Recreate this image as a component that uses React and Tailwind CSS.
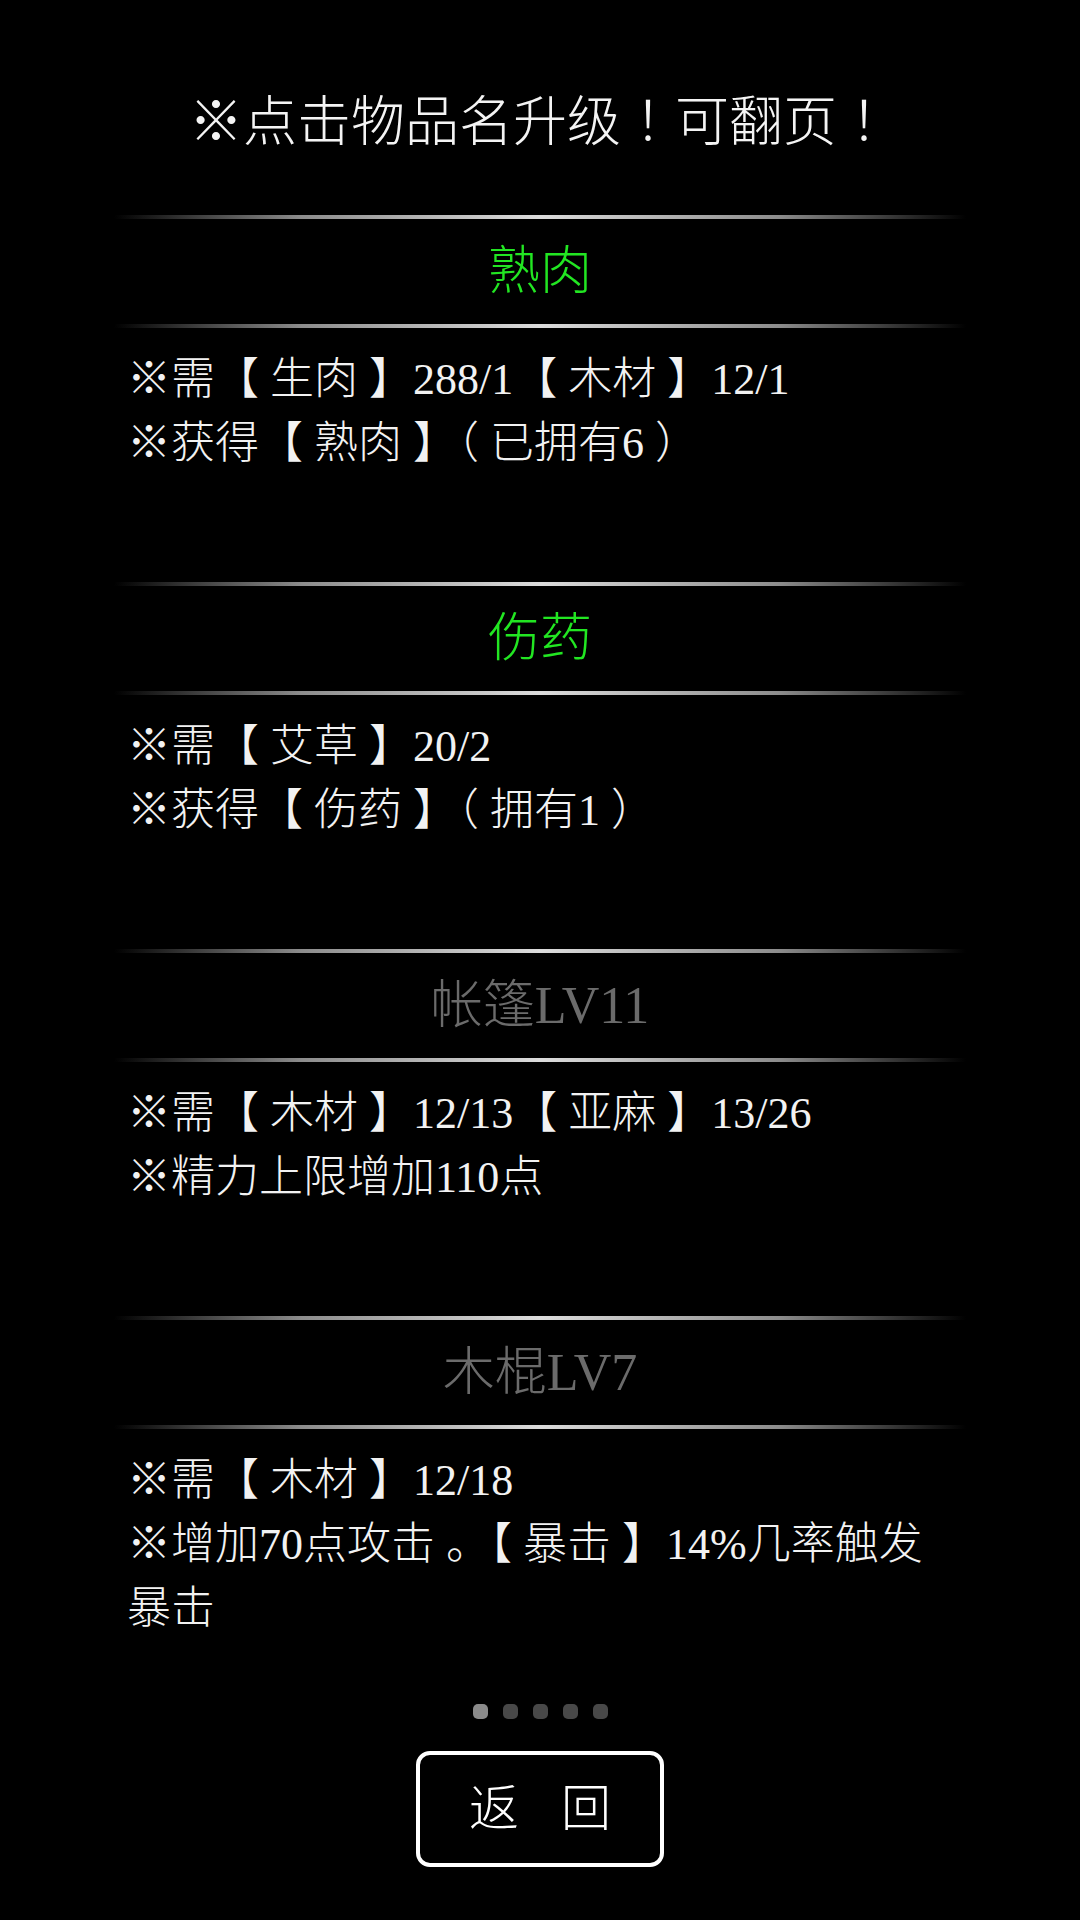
import React, { useState } from "react";

const recipes = [
  {
    id: 1,
    name: "熟肉",
    ready: true,
    lines: ["※需【 生肉 】288/1【 木材 】12/1", "※获得【 熟肉 】（ 已拥有6 ）"],
  },
  {
    id: 2,
    name: "伤药",
    ready: true,
    lines: ["※需【 艾草 】20/2", "※获得【 伤药 】（ 拥有1 ）"],
  },
  {
    id: 3,
    name: "帐篷LV11",
    ready: false,
    lines: ["※需【 木材 】12/13【 亚麻 】13/26", "※精力上限增加110点"],
  },
  {
    id: 4,
    name: "木棍LV7",
    ready: false,
    lines: ["※需【 木材 】12/18", "※增加70点攻击 。【 暴击 】14%几率触发暴击"],
  },
];

const Divider = () => (
  <div className="w-[852px] h-[4px] bg-[linear-gradient(to_right,transparent_0%,#8c8c8c_22%,#dcdcdc_50%,#8c8c8c_78%,transparent_100%)]" />
);

const RecipeSlot = ({ recipe }) => (
  <div className="h-[367px] w-[852px] flex flex-col">
    <Divider />
    <div className="h-[105px] flex items-center justify-center">
      <span
        className={`text-[52px] leading-none font-light ${
          recipe.ready ? "text-[#22e622]" : "text-[#6b6b6b]"
        }`}
      >
        {recipe.name}
      </span>
    </div>
    <Divider />
    <div className="pt-[20px] pl-[13px] pr-[17px] text-[44px] leading-[64px] font-light text-[#f2f2f2]">
      {recipe.lines.map((line, i) => (
        <p key={i}>{line}</p>
      ))}
    </div>
  </div>
);

export default function App() {
  const [page, setPage] = useState(0);

  return (
    <div className="w-[1080px] h-[1920px] bg-black flex flex-col items-center font-['Liberation_Serif','Noto_Sans_CJK_SC',serif] overflow-hidden">
      {/* header */}
      <div className="h-[215px] pt-[91px]">
        <p className="text-[54px] leading-[54px] font-light text-[#f4f4f4]">
          ※点击物品名升级
          <span className="font-['Noto_Sans_CJK_JP',sans-serif]">！</span>
          可翻页
          <span className="font-['Noto_Sans_CJK_JP',sans-serif]">！</span>
        </p>
      </div>

      {/* slots */}
      {recipes.map((recipe) => (
        <RecipeSlot key={recipe.id} recipe={recipe} />
      ))}

      {/* pager */}
      <div className="mt-[21px] flex gap-[15px]">
        {[0, 1, 2, 3, 4].map((i) => (
          <button
            key={i}
            onClick={() => setPage(i)}
            className={`w-[15px] h-[15px] rounded-[5px] ${
              page === i ? "bg-[#8a8a8a]" : "bg-[#484848]"
            }`}
          />
        ))}
      </div>

      <button className="mt-[32px] w-[248px] h-[116px] border-[4px] border-white rounded-[14px] flex items-center justify-center gap-[42px] text-[50px] leading-none font-light text-white">
        <span>返</span>
        <span>回</span>
      </button>
    </div>
  );
}
